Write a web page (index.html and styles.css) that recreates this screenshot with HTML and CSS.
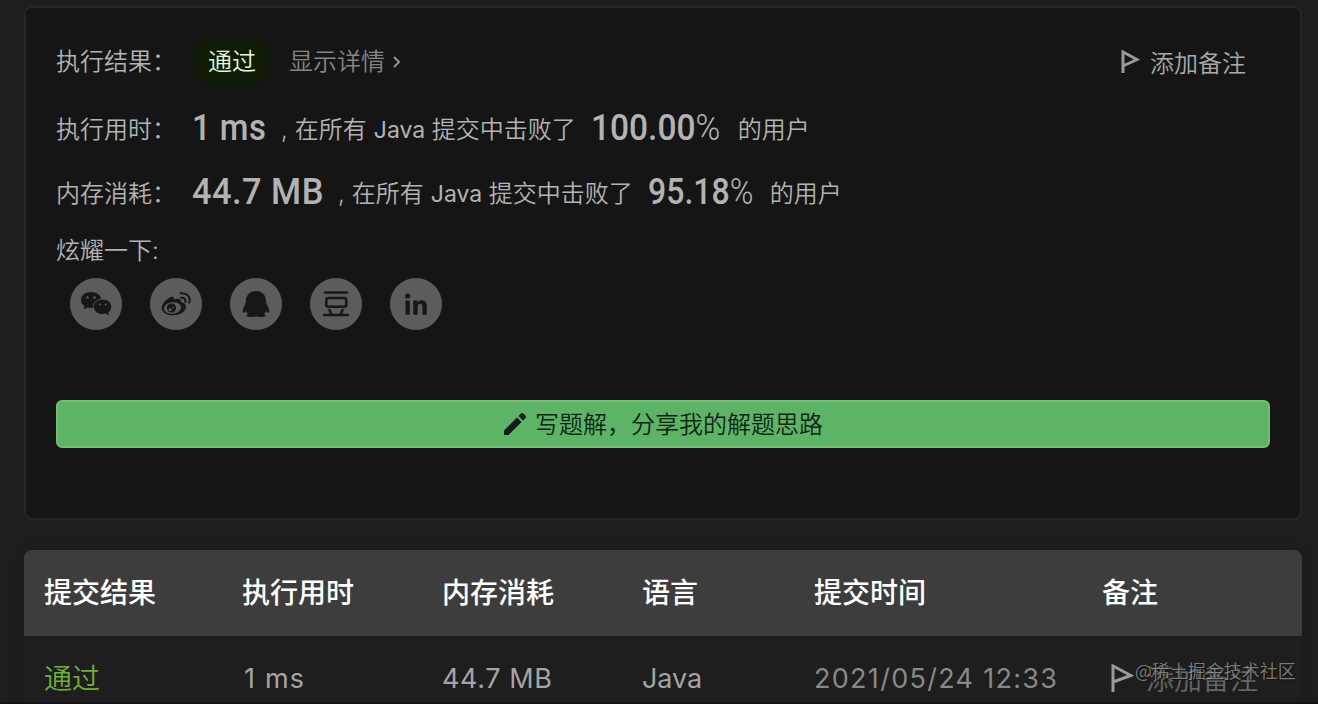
FILE: index.html
```html
<!DOCTYPE html>
<html lang="zh-CN">
<head>
<meta charset="utf-8">
<title>提交记录</title>
<link rel="stylesheet" href="styles.css">
</head>
<body>
<main class="page">
  <section class="panel">
    <div class="row status">
      <span class="label">执行结果：</span>
      <span class="badge">通过</span>
      <a class="detail">显示详情<svg class="chevron" viewBox="0 0 8 12"><path d="M1 1l5 5-5 5"/></svg></a>
      <a class="note"><svg class="flag" viewBox="0 0 20 26"><path d="M3 24V3l14 7.500L3 17"/></svg>添加备注</a>
    </div>
    <div class="row metric time">
      <span class="label">执行用时：</span>
      <strong class="value">1 ms</strong>
      <span class="comma">,</span><span>在所有</span><span class="lang">Java</span><span>提交中击败了</span>
      <strong class="percent">100.00<i>%</i></strong>
      <span>的用户</span>
    </div>
    <div class="row metric memory">
      <span class="label">内存消耗：</span>
      <strong class="value">44.7 MB</strong>
      <span class="comma">,</span><span>在所有</span><span class="lang">Java</span><span>提交中击败了</span>
      <strong class="percent">95.18<i>%</i></strong>
      <span>的用户</span>
    </div>
    <div class="row brag">炫耀一下:</div>
    <div class="shares">
      <a class="share"><svg viewBox="0 0 52 52">
        <path class="ink" d="M21 14c-5.800 0-10 3.500-10 8 0 2.500 1.300 4.600 3.500 6l-.8 3.500 4-2c1 .3 2.100.5 3.300.5 5.800 0 10.200-3.500 10.200-8S26.800 14 21 14z"/>
        <path class="ink cut" d="M32.500 21.500c-5 0-8.700 3.100-8.700 7.200s3.700 7.300 8.700 7.300c1 0 1.900-.1 2.800-.4l3.700 2-.7-3.300c1.900-1.300 3-3.300 3-5.600 0-4.100-3.800-7.200-8.800-7.200z"/>
        <g class="dot"><circle cx="17.500" cy="19.500" r="1.300"/><circle cx="24.500" cy="19.500" r="1.300"/><circle cx="29.700" cy="26.500" r="1"/><circle cx="35.500" cy="26.500" r="1"/></g>
      </svg></a>
      <a class="share"><svg viewBox="0 0 52 52">
        <path class="ink" d="M20.500 19.200c2.200-1 4 .1 3.500 2.400 3.900-1.600 7.700-.9 6.900 2.500 3.400.7 5.300 2.400 5 5.200-.5 4.800-6.400 8.200-13.100 8-6.500-.1-11.300-3.400-11-7.900.3-4.100 4.800-8.700 8.700-10.200z"/>
        <ellipse class="dot" cx="22.500" cy="30" rx="8.600" ry="5.700" transform="rotate(-8 22.500 30)"/>
        <circle class="ink" cx="21.500" cy="30" r="4.600"/>
        <circle class="dot" cx="20.200" cy="31.400" r="1.500"/><circle class="dot" cx="23" cy="29.200" r=".8"/>
        <path class="line thin" d="M31 19.800c2.900-.6 5.200 1.500 4.300 4.300M30.500 15.300c6.400-1 10.600 3.800 8.800 9.500"/>
      </svg></a>
      <a class="share"><svg viewBox="0 0 52 52">
        <path class="ink" d="M26 13c-6.300 0-10.200 4.600-10 10.200 0 2-.7 2.900-1.700 4.900-1.400 2.800-2 5.500-1.100 6.400.6.600 1.700-.3 2.600-1.600.5 1.500 1.300 2.100 2.300 3-1 .5-1.600 1-1.600 1.600 0 1 2 1.500 4.600 1.500 2 0 3.900-.2 4.900-.5 1 .3 2.900.5 4.900.5 2.600 0 4.600-.5 4.600-1.500 0-.6-.6-1.100-1.600-1.600 1-.9 1.800-1.500 2.300-3 .9 1.300 2 2.200 2.600 1.600.9-.9.300-3.600-1.100-6.400-1-2-1.700-2.900-1.700-4.900C36.200 17.600 32.300 13 26 13z"/>
      </svg></a>
      <a class="share"><svg viewBox="0 0 52 52">
        <path class="line" d="M15 14.500h22M14 37h24M19.500 32l2 4.500M32.500 32l-2 4.500"/><rect class="line" x="16.300" y="20" width="20" height="8.700" rx="2"/>
      </svg></a>
      <a class="share"><svg viewBox="0 0 52 52">
        <circle class="ink" cx="17.700" cy="18" r="2.600"/>
        <path class="ink" d="M15.500 22.500h4.300v14.300h-4.300zM23.300 22.500h4.100v1.900c.9-1.500 2.300-2.200 4.100-2.200 3.900 0 5.300 2.400 5.300 6.400v8.200h-4.300v-7.400c0-2.100-.4-3.700-2.300-3.700-1.800 0-2.600 1.400-2.600 3.600v7.500h-4.300z"/>
      </svg></a>
    </div>
    <button class="write"><svg class="pencil" viewBox="0 0 24 24"><path d="M1 18.500L14 5.500l4.500 4.500-13 13H1zM15.500 4l2.300-2.300c.9-.9 1.800-.9 2.700 0L22.300 3.500c.9.900.9 1.800 0 2.700L20 8.500z"/></svg><span>写题解，分享我的解题思路</span></button>
  </section>
  <section class="table">
    <div class="tr head">
      <span>提交结果</span><span>执行用时</span><span>内存消耗</span><span>语言</span><span>提交时间</span><span>备注</span>
    </div>
    <div class="tr body">
      <span class="pass">通过</span><span class="runtime">1 ms</span><span class="mem">44.7 MB</span><span class="java">Java</span><span class="date">2021/05/24 12:33</span><span class="remark"><svg class="flag" viewBox="0 0 24 30"><path d="M3 29V3l18 9.500L3 19"/></svg>添加备注</span>
    </div>
  </section>
  <div class="watermark">@稀土掘金技术社区</div>
</main>
</body>
</html>
```
FILE: styles.css
```css
* { box-sizing: border-box; }
body { margin: 0; background: #1e1e1e; color: #b3b3b3; font-family: Inter, "Noto Sans CJK SC", sans-serif; }
.page { position: relative; height: 704px; overflow: hidden; padding: 6px 16px 0 24px; border-bottom: 2px solid #161114; }
.panel { width: 1278px; height: 514px; padding: 22px 30px 0; border: 2px solid #262626; border-radius: 8px; background: #151515; }
.row { display: flex; align-items: center; white-space: nowrap; font-size: 24px; font-weight: 350; line-height: 64px; height: 64px; }
.label { width: 136px; flex: none; }
.badge { display: flex; align-items: center; justify-content: center; width: 80px; height: 48px; border-radius: 20px; background: #101b08; box-shadow: inset 0 0 6px #151515; color: #e2f8d4; }
.detail { display: flex; align-items: center; margin-left: 17px; color: #858585; }
.chevron { width: 8px; height: 12px; margin-left: 8px; fill: none; stroke: #929292; stroke-width: 2; }
.note { display: flex; align-items: center; margin: 4px 24px 0 auto; color: #aaa; }
.flag { fill: none; stroke: #999; stroke-width: 3; }
.note .flag { width: 20px; height: 26px; margin: -4px 10px 0 0; }
.time { margin-top: 2px; }
.metric > span { padding-top: 4px; }
.value, .percent { flex: none; transform-origin: left center; font-family: Roboto, sans-serif; font-size: 37px; font-weight: 500; }
.value { letter-spacing: .5px; }
.time .value { width: 74px; transform: scaleX(.89); }
.memory .value { width: 131px; transform: scaleX(.93); }
.comma { margin: 0 7px 0 15px; }
.lang { width: 50px; margin: 0 8px 0 7px; font-size: 23px; font-weight: 400; }
.percent { width: 131px; margin: 0 16px 0 15px; transform: scaleX(.905); }
.memory .percent { width: 106px; transform: scaleX(.865); }
.percent i { font-style: normal; font-weight: 300; }
.brag { height: 54px; line-height: 58px; }
.shares { display: flex; gap: 28px; margin-left: 14px; }
.share { display: block; width: 52px; height: 52px; border-radius: 50%; background: #5c5c5c; }
.share svg { display: block; width: 52px; height: 52px; }
.ink { fill: #171717; }
.cut { stroke: #5c5c5c; stroke-width: 1.500; paint-order: stroke; }
.dot { fill: #5c5c5c; }
.line { fill: none; stroke: #171717; stroke-width: 2.600; stroke-linecap: round; }
.thin { stroke-width: 2; }
.write { display: flex; align-items: center; justify-content: center; width: 1214px; height: 48px; margin-top: 70px; padding: 0; border: 2px solid #76bc76; border-radius: 6px; background: #5db366; color: #142416; font: 350 24px "Noto Sans CJK SC", sans-serif; }
.write span { padding-bottom: 4px; }
.pencil { width: 24px; height: 24px; margin-right: 8px; fill: #151d15; }
.table { width: 1278px; margin-top: 30px; border-radius: 8px 8px 0 0; box-shadow: 0 0 16px rgba(0, 0, 0, .16); }
.tr { display: grid; grid-template-columns: 198px 200px 200px 172px 288px 1fr; align-items: center; height: 86px; padding-left: 20px; font-size: 28px; white-space: nowrap; }
.head { padding-bottom: 4px; border-radius: 8px 8px 0 0; background: #3d3d3d; color: #fff; font-weight: 500; }
.body { padding-bottom: 2px; color: #a5a5a5; font-weight: 350; }
.pass { padding-bottom: 2px; color: #6fad3c; }
.runtime, .mem, .java, .date { font-size: 27px; font-weight: 400; }
.runtime { padding-left: 2px; letter-spacing: 1.200px; }
.mem { letter-spacing: .6px; }
.java { letter-spacing: -.1px; }
.date { color: #888; letter-spacing: 1.300px; }
.remark { display: flex; align-items: center; color: #666; }
.remark .flag { width: 24px; height: 30px; margin: 0 12px 0 8px; }
.watermark { position: absolute; left: 1135px; top: 656px; color: rgba(180, 180, 180, .65); font: 350 18px/28px "Noto Sans CJK SC", sans-serif; text-shadow: 1px 1px 1px #111; white-space: nowrap; }
```
